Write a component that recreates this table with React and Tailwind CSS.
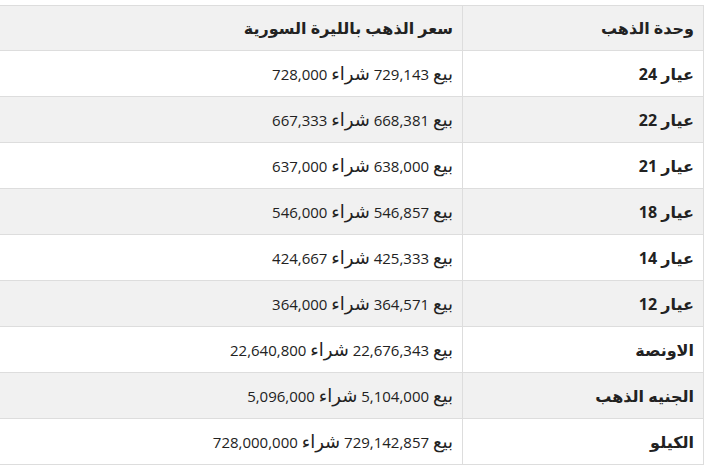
import React from "react";

const rows = [
  { unit: "عيار 24", sell: "729,143", buy: "728,000" },
  { unit: "عيار 22", sell: "668,381", buy: "667,333" },
  { unit: "عيار 21", sell: "638,000", buy: "637,000" },
  { unit: "عيار 18", sell: "546,857", buy: "546,000" },
  { unit: "عيار 14", sell: "425,333", buy: "424,667" },
  { unit: "عيار 12", sell: "364,571", buy: "364,000" },
  { unit: "الاونصة", sell: "22,676,343", buy: "22,640,800" },
  { unit: "الجنيه الذهب", sell: "5,104,000", buy: "5,096,000" },
  { unit: "الكيلو", sell: "729,142,857", buy: "728,000,000" },
];

export default function App() {
  return (
    <div
      className="w-[717px] h-[476px] bg-white overflow-hidden pt-[5px]"
      style={{ fontFamily: '"Open Sans", "DejaVu Sans", sans-serif' }}
    >
      <table dir="rtl" className="w-[704px] border-collapse text-[#222]">
        <thead>
          <tr className="bg-[#f1f1f1]">
            <th className="w-[241px] h-[45px] border border-[#dddddd] px-[9px] text-right text-[16px] font-bold">
              وحدة الذهب
            </th>
            <th className="h-[45px] border border-[#dddddd] border-l-0 px-[9px] text-right text-[16px] font-bold">
              سعر الذهب بالليرة السورية
            </th>
          </tr>
        </thead>
        <tbody>
          {rows.map((r, i) => (
            <tr key={r.unit} className={i % 2 === 1 ? "bg-[#f1f1f1]" : "bg-white"}>
              <td className="h-[46px] border border-[#dddddd] px-[9px] text-right text-[16px] font-bold">
                {r.unit}
              </td>
              <td className="h-[46px] border border-[#dddddd] border-l-0 px-[9px] text-right text-[15px]">
                <span className="text-[18px]">بيع</span> {r.sell}{" "}
                <span className="text-[18px]">شراء</span> {r.buy}
              </td>
            </tr>
          ))}
        </tbody>
      </table>
    </div>
  );
}
